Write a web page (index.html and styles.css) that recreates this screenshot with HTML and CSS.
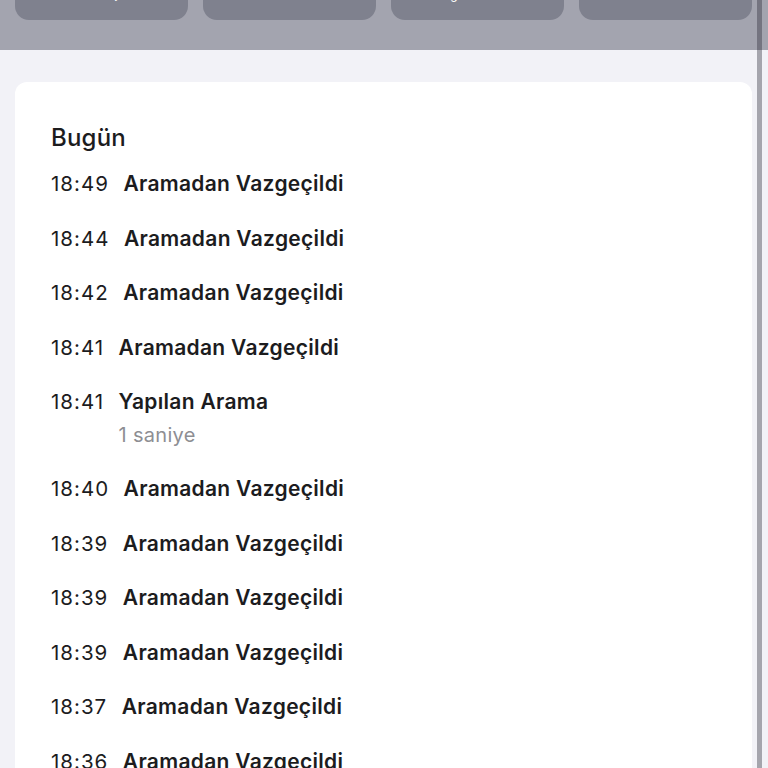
FILE: index.html
```html
<!DOCTYPE html>
<html lang="tr">
<head>
  <meta charset="UTF-8" />
  <meta name="viewport" content="width=device-width, initial-scale=1.0"/>
  <title>Arama Geçmişi</title>
  <link rel="stylesheet" href="styles.css">
</head>
<body>

  <!-- Contact action buttons (scrolled mostly out of view) -->
  <div class="actions-band">
    <div class="actions">
      <div class="action"><span>mesaj</span></div>
      <div class="action"><span>ara</span></div>
      <div class="action"><span>görüntülü</span></div>
      <div class="action"><span>mail</span></div>
    </div>
  </div>

  <div class="card">
    <h2>Bugün</h2>
    <ul class="calls">
      <li><span class="time">18:49</span><div class="info"><span class="label">Aramadan Vazgeçildi</span></div></li>
      <li><span class="time">18:44</span><div class="info"><span class="label">Aramadan Vazgeçildi</span></div></li>
      <li><span class="time">18:42</span><div class="info"><span class="label">Aramadan Vazgeçildi</span></div></li>
      <li><span class="time">18:41</span><div class="info"><span class="label">Aramadan Vazgeçildi</span></div></li>
      <li><span class="time">18:41</span><div class="info"><span class="label">Yapılan Arama</span><span class="duration">1 saniye</span></div></li>
      <li><span class="time">18:40</span><div class="info"><span class="label">Aramadan Vazgeçildi</span></div></li>
      <li><span class="time">18:39</span><div class="info"><span class="label">Aramadan Vazgeçildi</span></div></li>
      <li><span class="time">18:39</span><div class="info"><span class="label">Aramadan Vazgeçildi</span></div></li>
      <li><span class="time">18:39</span><div class="info"><span class="label">Aramadan Vazgeçildi</span></div></li>
      <li><span class="time">18:37</span><div class="info"><span class="label">Aramadan Vazgeçildi</span></div></li>
      <li><span class="time">18:36</span><div class="info"><span class="label">Aramadan Vazgeçildi</span></div></li>
      <li><span class="time">18:35</span><div class="info"><span class="label">Aramadan Vazgeçildi</span></div></li>
    </ul>
  </div>

  <div class="scrollbar"></div>

</body>
</html>
```

FILE: styles.css
```css
html, body {
  height: 100%;
}

body {
  font-family: Inter, "Noto Sans", "Liberation Sans", sans-serif;
  background-color: #f2f2f7;
  color: #1c1c1e;
  margin: 0;
  padding: 0;
  overflow: hidden;
}

/* Top band with action buttons */
.actions-band {
  background-color: #a3a4af;
  height: 50px;
  overflow: hidden;
}

.actions {
  display: flex;
  gap: 15px;
  padding: 0 16px 0 15px;
  margin-top: -40px;
}

.action {
  flex: 1;
  height: 60px;
  background-color: #7f818e;
  border-radius: 14px;
  display: flex;
  align-items: flex-end;
  justify-content: center;
}

.action span {
  color: #fff;
  font-size: 12px;
  line-height: 14px;
  padding-bottom: 18px;
}

/* Calls card */
.card {
  background: white;
  margin: 32px 16px 0 15px;
  padding: 42px 36px 0 36px;
  border-radius: 12px;
  min-height: 800px;
}

.card h2 {
  font-size: 24px;
  font-weight: 500;
  letter-spacing: 0.2px;
  line-height: 28px;
  margin: 0 0 5px 0;
}

.calls {
  list-style: none;
  margin: 0;
  padding: 0;
}

.calls li {
  display: flex;
  gap: 14.5px;
  padding: 15.25px 0;
  line-height: 24px;
}

.time {
  font-size: 20.5px;
  font-weight: 400;
  letter-spacing: 1px;
}

.info {
  display: flex;
  flex-direction: column;
}

.label {
  font-size: 21px;
  font-weight: 600;
  letter-spacing: 0.3px;
}

.duration {
  font-size: 20px;
  letter-spacing: 0.3px;
  color: #8e8e93;
  padding-top: 10px;
  line-height: 22.5px;
}

/* Overlay scroll indicator */
.scrollbar {
  position: fixed;
  top: 0;
  bottom: 0;
  left: 757px;
  width: 5px;
  background: rgba(40, 40, 52, 0.38);
}
```
